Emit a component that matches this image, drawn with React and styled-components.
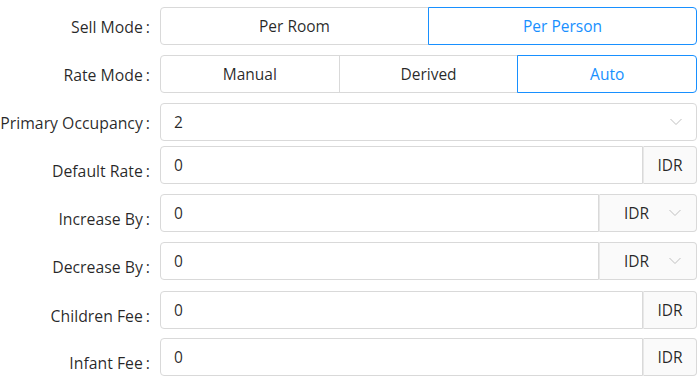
import styled, { createGlobalStyle } from "styled-components";

const GlobalStyle = createGlobalStyle`
  body {
    margin: 0;
    background: #ffffff;
    font-family: "Open Sans", "Noto Sans", sans-serif;
    color: rgba(0, 0, 0, 0.85);
  }
`;

const Form = styled.div`
  display: flex;
  flex-direction: column;
  padding: 7px 3px 0 0;
  width: 700px;
  box-sizing: border-box;
`;

const Row = styled.div`
  display: flex;
  align-items: flex-start;
  margin-top: ${(p) => p.$gap}px;
`;

const Label = styled.div`
  width: 152px;
  height: 38px;
  flex: none;
  text-align: right;
  font-size: 15.8px;
  line-height: ${(p) => (p.$low ? 50 : 40)}px;
  padding-right: 2px;
  box-sizing: border-box;
  white-space: nowrap;
  .colon {
    margin-left: 3px;
  }
`;

const Control = styled.div`
  flex: 1;
  margin-left: 8px;
  display: flex;
  height: 38px;
  box-sizing: border-box;
`;

const Segment = styled.div`
  flex: 1;
  display: flex;
  align-items: center;
  justify-content: center;
  font-size: 15.5px;
  box-sizing: border-box;
  border: 1px solid ${(p) => (p.$active ? "#1890ff" : "#d9d9d9")};
  margin-left: -1px;
  color: ${(p) => (p.$active ? "#1890ff" : "rgba(0,0,0,0.85)")};
  position: relative;
  z-index: ${(p) => (p.$active ? 1 : 0)};
  &:first-child {
    margin-left: 0;
    border-radius: 4px 0 0 4px;
  }
  &:last-child {
    border-radius: 0 4px 4px 0;
  }
`;

const Field = styled.div`
  flex: 1;
  display: flex;
  align-items: center;
  padding: 0 14px 0 13px;
  border: 1px solid #d9d9d9;
  border-radius: ${(p) => (p.$addon ? "4px 0 0 4px" : "4px")};
  font-size: 15.5px;
  box-sizing: border-box;
  justify-content: space-between;
`;

const Addon = styled.div`
  flex: none;
  width: ${(p) => p.$width}px;
  display: flex;
  align-items: center;
  justify-content: ${(p) => (p.$select ? "space-between" : "center")};
  padding: ${(p) => (p.$select ? "0 15px 0 24px" : "0")};
  background: #fafafa;
  border: 1px solid #d9d9d9;
  border-left: 1px solid #e8e8e8;
  border-radius: 0 4px 4px 0;
  font-size: 15.5px;
  box-sizing: border-box;
`;

const Chevron = () => (
  <svg width="12" height="8" viewBox="0 0 12 8" fill="none">
    <polyline points="0.5,1 6,6.5 11.5,1" stroke="#bfbfbf" strokeWidth="1" />
  </svg>
);

const FormRow = ({ label, gap, low, children }) => (
  <Row $gap={gap}>
    <Label $low={low}>
      {label}
      <span className="colon">:</span>
    </Label>
    <Control>{children}</Control>
  </Row>
);

const AmountRow = ({ label, gap, select }) => (
  <FormRow label={label} gap={gap} low>
    <Field $addon>0</Field>
    {select ? (
      <Addon $width={98} $select>
        IDR
        <Chevron />
      </Addon>
    ) : (
      <Addon $width={54}>IDR</Addon>
    )}
  </FormRow>
);

export default function App() {
  return (
    <>
      <GlobalStyle />
      <Form>
        <FormRow label="Sell Mode" gap={0}>
          <Segment>Per Room</Segment>
          <Segment $active>Per Person</Segment>
        </FormRow>
        <FormRow label="Rate Mode" gap={10}>
          <Segment>Manual</Segment>
          <Segment>Derived</Segment>
          <Segment $active>Auto</Segment>
        </FormRow>
        <FormRow label="Primary Occupancy" gap={10}>
          <Field>
            2
            <Chevron />
          </Field>
        </FormRow>
        <AmountRow label="Default Rate" gap={5} />
        <AmountRow label="Increase By" gap={10} select />
        <AmountRow label="Decrease By" gap={10} select />
        <AmountRow label="Children Fee" gap={11} />
        <AmountRow label="Infant Fee" gap={9} />
      </Form>
    </>
  );
}
